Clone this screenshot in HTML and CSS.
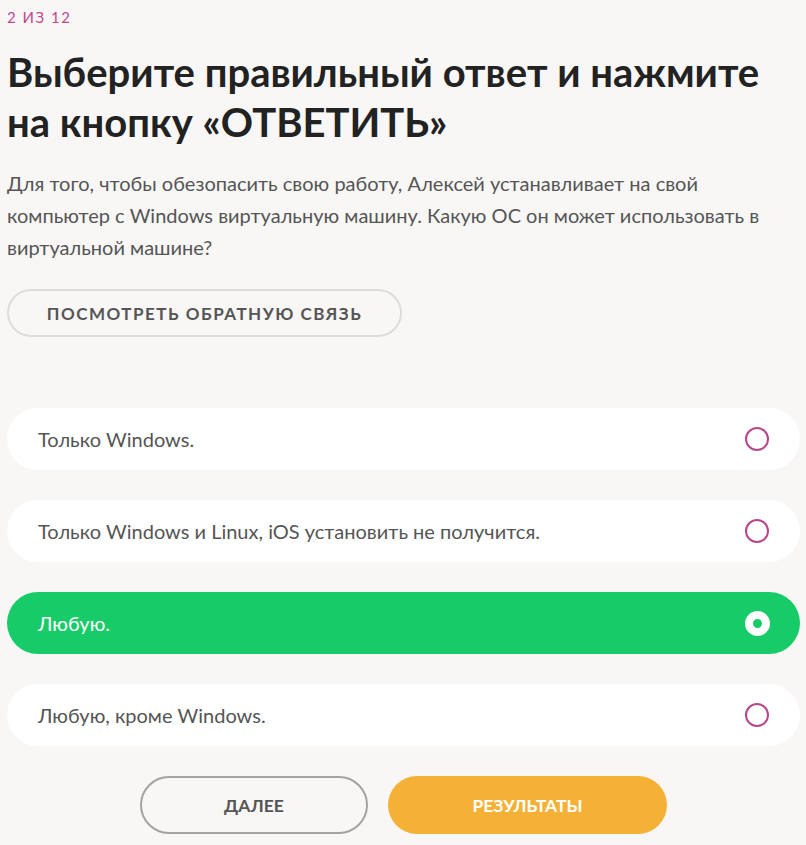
FILE: index.html
```html
<!DOCTYPE html>
<html lang="ru">
<head>
    <meta charset="UTF-8">
    <meta name="viewport" content="width=device-width, initial-scale=1.0">
    <title>Тест</title>
    <link rel="stylesheet" href="styles.css">
</head>
<body>

    <div class="quiz">
        <div class="counter">2 из 12</div>
        <h1>Выберите правильный ответ и нажмите на кнопку «ОТВЕТИТЬ»</h1>
        <p class="question">Для того, чтобы обезопасить свою работу, Алексей устанавливает на свой компьютер с Windows виртуальную машину. Какую ОС он может использовать в виртуальной машине?</p>

        <button class="feedback">Посмотреть обратную связь</button>

        <div class="options">
            <div class="option">
                <span>Только Windows.</span>
                <span class="radio"></span>
            </div>
            <div class="option">
                <span>Только Windows и Linux, iOS установить не получится.</span>
                <span class="radio"></span>
            </div>
            <div class="option selected">
                <span>Любую.</span>
                <span class="radio"></span>
            </div>
            <div class="option">
                <span>Любую, кроме Windows.</span>
                <span class="radio"></span>
            </div>
        </div>

        <div class="actions">
            <button class="btn next">Далее</button>
            <button class="btn results">Результаты</button>
        </div>
    </div>

</body>
</html>
```

FILE: styles.css
```css
body {
    margin: 0;
    background: #f8f7f5;
    font-family: Lato, "Open Sans", sans-serif;
    color: #555;
}
.quiz {
    padding: 6px 6px 0 7px;
}
.counter {
    font-size: 15px;
    color: #c0478f;
    text-transform: uppercase;
    letter-spacing: 1.5px;
    line-height: 22px;
}
h1 {
    margin: 19px 0 0;
    font-size: 40px;
    line-height: 50px;
    font-weight: 700;
    color: #222;
}
.question {
    margin: 20px 0 0;
    font-size: 20px;
    line-height: 32px;
    color: #555;
}
button {
    font-family: inherit;
    cursor: pointer;
}
.feedback {
    margin-top: 26px;
    width: 395px;
    height: 48px;
    border: 2px solid #dedcd9;
    border-radius: 24px;
    background: transparent;
    color: #555;
    font-size: 17px;
    font-weight: 700;
    letter-spacing: 1.5px;
    text-transform: uppercase;
}
.options {
    margin-top: 71px;
    display: flex;
    flex-direction: column;
    gap: 30px;
}
.option {
    display: flex;
    align-items: center;
    justify-content: space-between;
    height: 62px;
    padding: 0 31px;
    border-radius: 31px;
    background: #fff;
    font-size: 20px;
    color: #555;
}
.radio {
    width: 20px;
    height: 20px;
    border: 2px solid #b8468b;
    border-radius: 50%;
}
.option.selected {
    background: #17cc68;
    color: #fff;
}
.option.selected .radio {
    width: 9px;
    height: 9px;
    border: 8.5px solid #fff;
    background: #17cc68;
    margin-right: -1px;
}
.actions {
    margin-top: 30px;
    display: flex;
    justify-content: center;
    gap: 20px;
}
.btn {
    height: 58px;
    border-radius: 29px;
    font-size: 17.5px;
    font-weight: 700;
    text-transform: uppercase;
}
.next {
    width: 228px;
    border: 2px solid #a3a3a3;
    background: transparent;
    color: #555;
}
.results {
    width: 279px;
    border: none;
    background: #f4b136;
    color: #fff;
}
```
